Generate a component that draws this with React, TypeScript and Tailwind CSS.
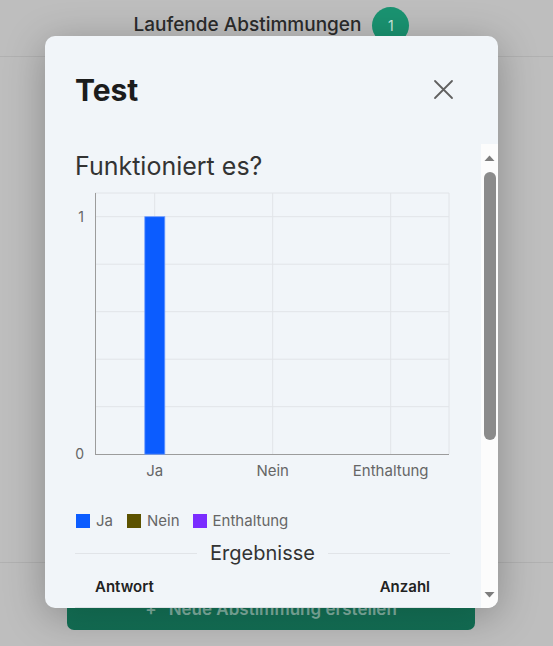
import React from "react";

function Chart() {
  const hLines = [7, 30.7, 78.2, 125.7, 173.2, 220.7];
  const vLines = [79.7, 197.7, 315.7, 374];
  return (
    <svg width="375" height="300" viewBox="0 0 375 300" className="block">
      {hLines.map((y) => (
        <line key={y} x1="20" x2="374" y1={y} y2={y} stroke="#e1e4e8" strokeWidth="1" />
      ))}
      {vLines.map((x) => (
        <line key={x} x1={x} x2={x} y1="7" y2="268" stroke="#e1e4e8" strokeWidth="1" />
      ))}
      <line x1="20.5" x2="20.5" y1="7" y2="268.5" stroke="#9c9c9c" strokeWidth="1" />
      <line x1="20" x2="374" y1="268.5" y2="268.5" stroke="#9c9c9c" strokeWidth="1" />
      <rect x="69.8" y="30.7" width="20" height="237.5" fill="#0b5cff" stroke="#6d9bff" strokeWidth="0.8" />
      <g fill="#666" fontFamily="Inter, sans-serif" fontSize="14">
        <text x="9" y="35.5" textAnchor="end">1</text>
        <text x="9" y="273" textAnchor="end">0</text>
      </g>
      <g fill="#666" fontFamily="Inter, sans-serif" fontSize="15" textAnchor="middle">
        <text x="79.7" y="289.5">Ja</text>
        <text x="197.7" y="289.5">Nein</text>
        <text x="315.7" y="289.5">Enthaltung</text>
      </g>
    </svg>
  );
}

function Scrollbar() {
  return (
    <div className="flex w-[17px] shrink-0 flex-col items-center bg-[#fcfcfc]">
      <svg width="11" height="7" viewBox="0 0 11 7" className="mt-[11px]">
        <path d="M5.5 0.5 L10.5 6 L0.5 6 Z" fill="#7d7d7d" />
      </svg>
      <div className="mt-[10px] h-[268px] w-[12px] rounded-full bg-[#8b8b8b]" />
      <div className="flex-1" />
      <svg width="11" height="7" viewBox="0 0 11 7" className="mb-[10px]">
        <path d="M0.5 1 L10.5 1 L5.5 6.5 Z" fill="#7d7d7d" />
      </svg>
    </div>
  );
}

export default function App() {
  return (
    <div className="relative h-[646px] w-[553px] overflow-hidden bg-[#bebebe] font-['Inter',sans-serif]">
      {/* background page */}
      <div className="flex h-[57px] items-center justify-center gap-[11px] border-b border-[#b1b1b1] pb-[8px] pr-[10px] pt-[2px]">
        <span className="text-[19px] font-medium text-[#2b2b2b]">Laufende Abstimmungen</span>
        <span className="flex h-[37px] w-[37px] items-center justify-center rounded-full bg-[#1a9371] text-[14px] text-[#cde8df]">
          1
        </span>
      </div>
      <div className="mt-[505px] border-t border-[#b1b1b1] pl-[67px] pr-[78px] pt-[27px]">
        <div className="flex h-[40px] items-center justify-center gap-3 rounded-[7px] bg-gradient-to-b from-[#178061] to-[#136f55] text-[17px] font-semibold text-[#86b8a8]">
          <span>+</span>
          <span>Neue Abstimmung erstellen</span>
        </div>
      </div>

      {/* modal */}
      <div className="absolute left-[45px] top-[36px] flex h-[572px] w-[453px] flex-col overflow-hidden rounded-[10px] bg-[#f1f5f9] shadow-[0_8px_40px_rgba(0,0,0,0.28)]">
        <div className="flex h-[108px] shrink-0 items-start justify-between pl-[30px] pr-[44px] pt-[35px]">
          <h2 className="text-[30px] font-bold leading-[38px] text-[#1c1c1c]">Test</h2>
          <button className="mt-[8px] text-[#606060]" aria-label="close">
            <svg width="21" height="21" viewBox="0 0 21 21">
              <path d="M2 2 L19 19 M19 2 L2 19" stroke="currentColor" strokeWidth="1.8" strokeLinecap="round" />
            </svg>
          </button>
        </div>
        <div className="flex min-h-0 flex-1">
          <div className="min-w-0 flex-1 overflow-hidden">
            <div className="pb-[160px] pl-[30px] pr-[31px]">
              <h3 className="mt-[6px] text-[25px] font-normal leading-[32px] text-[#333]">Funktioniert es?</h3>
              <div className="mt-[4px]">
                <Chart />
              </div>
              <div className="mt-[25px] flex h-[20px] items-center text-[15px] text-[#666]">
                <span className="ml-[1px] h-[14px] w-[14px] bg-[#0b5cff]" />
                <span className="ml-[6px]">Ja</span>
                <span className="ml-[14px] h-[14px] w-[14px] bg-[#5c5200]" />
                <span className="ml-[6px]">Nein</span>
                <span className="ml-[13px] h-[14px] w-[14px] bg-[#7b2cff]" />
                <span className="ml-[6px]">Enthaltung</span>
              </div>
              <div className="mt-[8px] flex items-center gap-[13px]">
                <div className="h-px flex-1 bg-[#e1e4e8]" />
                <span className="text-[20px] leading-[28px] text-[#333]">Ergebnisse</span>
                <div className="h-px flex-1 bg-[#e1e4e8]" />
              </div>
              <div className="flex h-[40px] items-center justify-between px-[20px] text-[15px] font-semibold text-[#222]">
                <span>Antwort</span>
                <span>Anzahl</span>
              </div>
              <div className="flex h-[44px] items-center justify-between border-t border-[#dee2e6] px-[20px] text-[15px] text-[#222]">
                <span>Ja</span>
                <span>1</span>
              </div>
            </div>
          </div>
          <Scrollbar />
        </div>
      </div>
    </div>
  );
}
